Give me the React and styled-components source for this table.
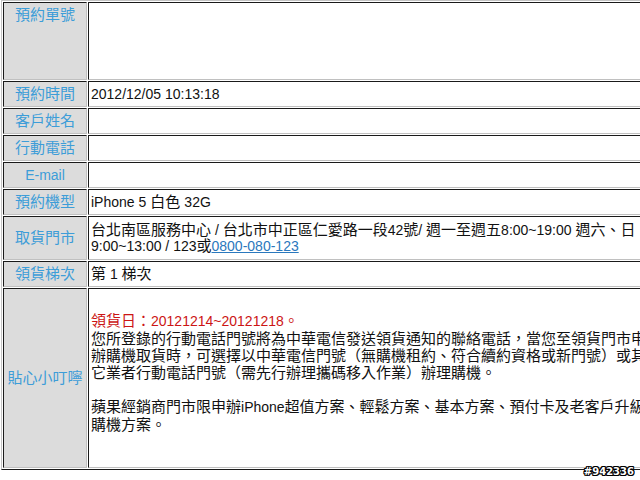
import React from 'react';
import styled, { createGlobalStyle } from 'styled-components';

const Global = createGlobalStyle`
  html, body { margin: 0; padding: 0; background: #fff; overflow: hidden; }
  body { font-family: "Liberation Sans", "Noto Sans CJK TC", sans-serif; }
`;

const Page = styled.div`
  position: relative;
  width: 640px;
  height: 480px;
  overflow: hidden;
  padding-left: 1px;
  box-sizing: border-box;
`;

const Table = styled.table`
  width: 664px;
  border-collapse: separate;
  border-spacing: 1px;
  border: 1px solid;
  border-color: #c4c4c4 #1a1a1a #1a1a1a #c4c4c4;
  background: #fff;
  font-size: 15px;
  line-height: 16px;
  color: #111;
`;

const Label = styled.th`
  width: 78px;
  padding: 4px 2px;
  background: #dcdcdc;
  color: #3d9dd8;
  font-weight: normal;
  text-align: center;
  vertical-align: ${(p) => (p.$top ? 'top' : 'middle')};
  white-space: nowrap;
  border: 1px solid;
  border-color: #1a1a1a #c0c0c0 #c0c0c0 #1a1a1a;
`;

const Value = styled.td`
  padding: ${(p) => p.$pad || '4px 2px'};
  background: #fff;
  text-align: left;
  vertical-align: middle;
  white-space: nowrap;
  border: 1px solid;
  border-color: #1a1a1a #c0c0c0 #c0c0c0 #1a1a1a;
`;

const Spacer = styled.div`
  height: ${(p) => p.$h}px;
`;

const Lat = styled.span`
  font-size: 14px;
`;

const PhoneLink = styled.a`
  color: #2a78bd;
  text-decoration: underline;
`;

const Notice = styled.div`
  height: 170px;
  box-sizing: border-box;
  padding-top: 19px;
  line-height: 17px;
`;

const Line = styled.div`
  white-space: nowrap;
  color: ${(p) => (p.$red ? '#cc1515' : 'inherit')};
`;

const Blank = styled.div`
  height: 17px;
`;

const Mark = styled.div`
  position: absolute;
  right: 6px;
  top: 466px;
  font: bold 10px/11px "DejaVu Sans", sans-serif;
  color: #fff;
  letter-spacing: 0;
  text-shadow: 1px 0 0 #000, -1px 0 0 #000, 0 1px 0 #000, 0 -1px 0 #000,
    1px 1px 0 #000, -1px -1px 0 #000, 1px -1px 0 #000, -1px 1px 0 #000;
`;

export default function App() {
  return (
    <Page>
      <Global />
      <Table>
        <tbody>
          <tr>
            <Label $top>預約單號</Label>
            <Value>
              <Spacer $h={68} />
            </Value>
          </tr>
          <tr>
            <Label>預約時間</Label>
            <Value>
              <Lat>2012/12/05 10:13:18</Lat>
            </Value>
          </tr>
          <tr>
            <Label>客戶姓名</Label>
            <Value>
              <Spacer $h={16} />
            </Value>
          </tr>
          <tr>
            <Label>行動電話</Label>
            <Value>
              <Spacer $h={16} />
            </Value>
          </tr>
          <tr>
            <Label>
              <Lat>E-mail</Lat>
            </Label>
            <Value>
              <Spacer $h={16} />
            </Value>
          </tr>
          <tr>
            <Label>預約機型</Label>
            <Value>
              <Lat>iPhone 5 </Lat>白色 <Lat>32G</Lat>
            </Value>
          </tr>
          <tr>
            <Label>取貨門市</Label>
            <Value $pad="5px 2px">
              <Line>
                台北南區服務中心<Lat> / </Lat>台北市中正區仁愛路一段<Lat>42</Lat>號<Lat>/ </Lat>
                週一至週五<Lat>8:00~19:00 </Lat>週六、日
              </Line>
              <Line>
                <Lat>9:00~13:00 / 123</Lat>或
                <PhoneLink href="#">
                  <Lat>0800-080-123</Lat>
                </PhoneLink>
              </Line>
            </Value>
          </tr>
          <tr>
            <Label>領貨梯次</Label>
            <Value>
              第<Lat> 1 </Lat>梯次
            </Value>
          </tr>
          <tr>
            <Label>貼心小叮嚀</Label>
            <Value>
              <Notice>
                <Line $red>
                  領貨日：<Lat>20121214~20121218</Lat>。
                </Line>
                <Line>您所登錄的行動電話門號將為中華電信發送領貨通知的聯絡電話，當您至領貨門市申</Line>
                <Line>辦購機取貨時，可選擇以中華電信門號（無購機租約、符合續約資格或新門號）或其</Line>
                <Line>它業者行動電話門號（需先行辦理攜碼移入作業）辦理購機。</Line>
                <Blank />
                <Line>
                  蘋果經銷商門市限申辦<Lat>iPhone</Lat>超值方案、輕鬆方案、基本方案、預付卡及老客戶升級
                </Line>
                <Line>購機方案。</Line>
              </Notice>
            </Value>
          </tr>
        </tbody>
      </Table>
      <Mark>#942336</Mark>
    </Page>
  );
}
